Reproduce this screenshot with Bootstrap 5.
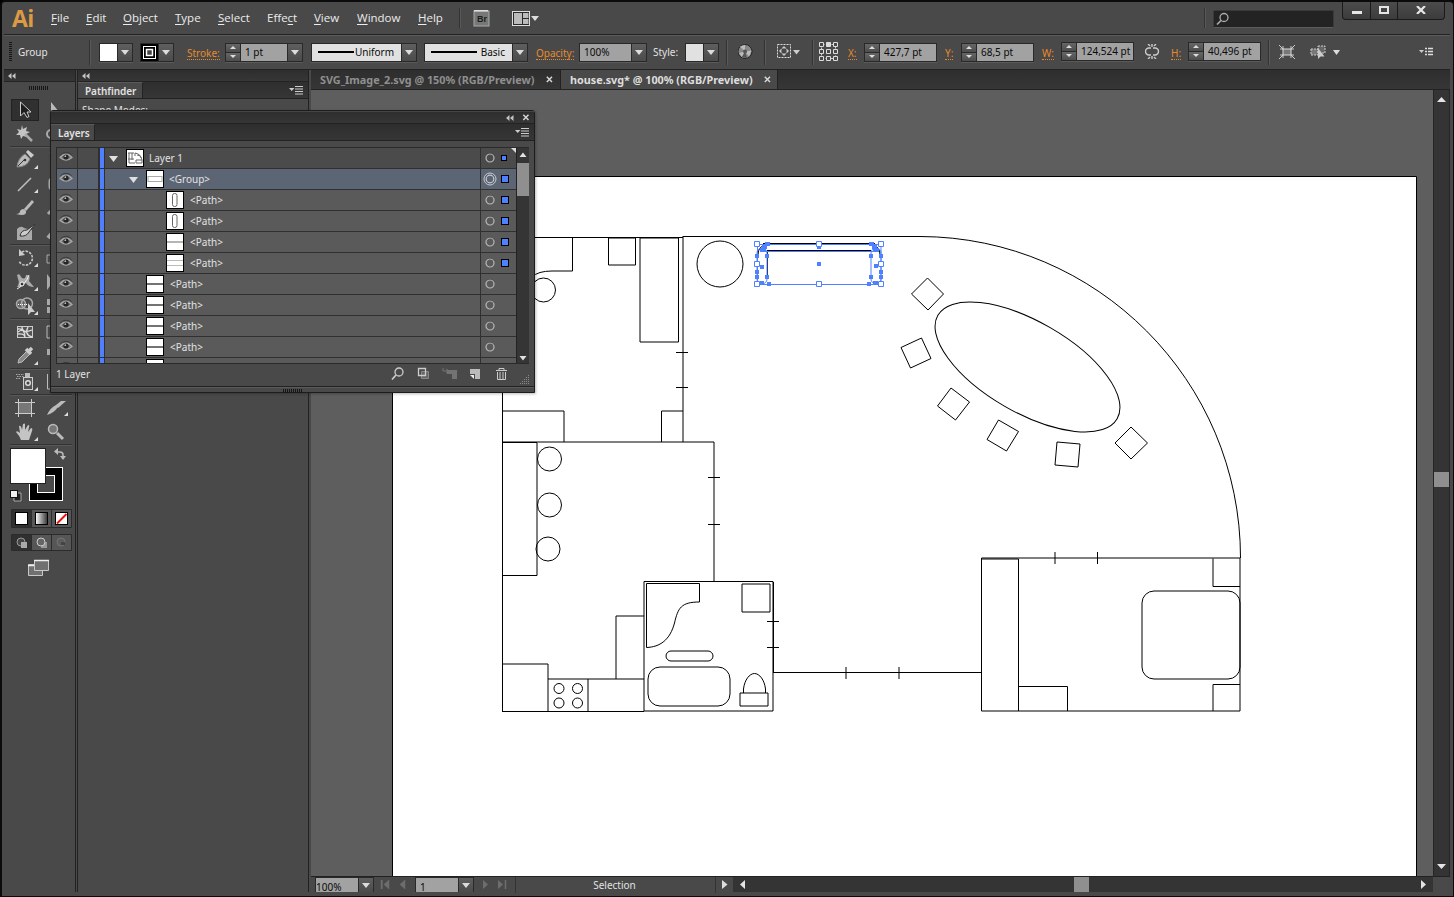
<!DOCTYPE html>
<html lang="en">
<head>
<meta charset="utf-8">
<title>Illustrator</title>
<link rel="stylesheet" href="https://cdn.jsdelivr.net/npm/bootstrap@5.3.0/dist/css/bootstrap.min.css">
<script src="https://cdn.jsdelivr.net/npm/bootstrap@5.3.0/dist/js/bootstrap.bundle.min.js"></script>
<style>
*{box-sizing:border-box}
body{width:1454px;height:897px;overflow:hidden;background:#000;font:10px/14px "Noto Sans","Open Sans",sans-serif;color:#e2e2e2;white-space:nowrap}
svg{display:block;flex:none;overflow:hidden}
.win{width:1454px;height:897px;overflow:hidden;background:#494949;border:1px solid #0b0b0b;border-left-width:2px;border-top-width:2px;border-radius:5px 5px 0 0;padding:0 3px 3px 2px}
.menubar{height:32px;display:grid;grid-template-columns:47px 35px 37px 52px 43px 49px 47px 43px 61px 41px 14px 39px 692px 9px 129px 1fr;align-items:center;font:11.5px/18px "Open Sans","Noto Sans",sans-serif;color:#ececec}
.menubar u{text-underline-offset:2px}
.logo{font:bold 23px/30px "Open Sans",sans-serif;color:#dc9a45;padding-left:8px;letter-spacing:-.5px}
.vsep{width:2px;height:20px;background:#333;border-right:1px solid #595959}
.finder{width:121px;height:18px;background:#232323;border:1px solid #3a3a3a;border-bottom-color:#5c5c5c;border-radius:2px;margin-top:1px}
.winbtns{width:103px;height:18px;border:1px solid #1a1a1a;border-top:0;border-radius:0 0 4px 4px;align-self:start;background:linear-gradient(#4c4c4c,#3c3c3c)}
.winbtns>span{border-left:1px solid #1a1a1a;display:flex;align-items:center;justify-content:center;padding-bottom:1px}
.winbtns>span:first-child{border-left:0;width:27px}
.winbtns>span:nth-child(2){width:27px}
.winbtns>span:last-child{flex:1}
.ctl{height:35px;border-top:1px solid #222;box-shadow:inset 0 1px #5c5c5c;display:grid;align-items:center;grid-template-columns:14px 81px 41px 47px 38px 86px 113px 112px 43px 74px 32px 41px 12px 26px 13px 35px 7px 29px 16px 81px 16px 81px 19px 84px 26px 17px 80px 11px 31px 109px 20px}
.ctl>svg{margin-top:-1px}
.fld{display:inline-flex;height:19px;border:1px solid #292929;box-shadow:0 1px #5a5a5a;color:#0a0a0a;width:fit-content}
.val{background:#a2a2a2;padding:0 4px;line-height:17px}
.lite{background:#e1e1e1;display:flex;align-items:center;justify-content:space-between;padding:0 7px 0 6px}
.ln{height:2px;background:#000}
.arr{width:15px;background:linear-gradient(#5f5f5f,#4b4b4b);border-left:1px solid #292929;display:flex;align-items:center;justify-content:center}
.arr:after{content:"";border:4px solid transparent;border-top:5px solid #dcdcdc;border-bottom:0}
.spin{width:15px;border-right:1px solid #292929;display:flex;flex-direction:column}
.spin i{flex:1;background:linear-gradient(#666,#4d4d4d);display:flex;align-items:center;justify-content:center}
.spin i+i{border-top:1px solid #292929}
.spin i:after{content:"";border:3px solid transparent;border-bottom:3px solid #ddd;border-top:0}
.spin i+i:after{border-bottom:0;border-top:3px solid #ddd}
.w-18{width:17px}.w-46{width:46px}.w-56{width:56px}
.up{margin-bottom:2px}
.uniform{width:89px}.basic{width:87px}.opac{width:51px}
.uniform .ln{width:36px}.basic .ln{width:46px}
.org{color:#e88a2c;border-bottom:1px dotted #e88a2c;line-height:12px;width:fit-content;margin-top:2px}
.vline{width:2px;height:25px;background:#333;border-right:1px solid #5a5a5a}
.work{height:823px;border-top:1px solid #222;position:relative}
.dark{background:linear-gradient(#2e2e2e,#363636)}
.tools{width:72px;border-right:1px solid #222}
.tcol{width:62px;margin-left:6px}
.tgrip{height:16px;padding:4px 2px 0 0}
.hd{height:12px;border-bottom:1px solid #232323;padding:3px 0 0 4px}
.grip{width:20px;height:4px;background:repeating-linear-gradient(90deg,#161616 0 1px,transparent 1px 2px)}
.trow{height:24px;display:flex}
.trow svg{width:30px;height:24px}
.tsep{height:2px;background:#333;border-bottom:1px solid #585858}
.side{width:232px;border-left:1px solid #222;margin-left:1px;border-right:1px solid #222}
.pbar{height:17px;border-bottom:1px solid #222}
.ptab{background:#494949;border-right:1px solid #222;border-top:1px solid #5a5a5a;font-weight:600;line-height:16px;width:65px;padding-left:7px;letter-spacing:-.05px}
.layers .ptab{width:44px}
.doc{width:1139px;margin-left:2px}
.dtabs{height:20px;border-bottom:1px solid #222;font-size:10.8px;font-weight:700;color:#8f8f8f}
.dtabs>span{border-right:1px solid #222;display:flex;align-items:center;justify-content:space-between}
.t1{width:250px;padding:0 7px 0 9px}.t2{width:217px;padding:0 6px 0 9px;background:#494949;color:#dedede}
.stage{height:786px}
.foot{height:16px;background:#494949;border-top:1px solid #222;display:grid;grid-template-columns:4px 57px 43px 58px 42px 201px 17px 701px 1fr}
.foot .fld{height:15px;border-bottom:0;box-shadow:none}
.foot .val{line-height:18px;width:42px}
.stat{border-left:1px solid #333;border-right:1px solid #333;line-height:16px;text-align:center;padding-right:2px}
.layers{position:absolute;left:46px;top:40px;width:485px;height:283px;background:#494949;border:1px solid #1d1d1d;border-radius:3px 3px 0 0;box-shadow:1px 1px 3px #0004}
.lhd{height:13px;border-bottom:1px solid #222;border-top:1px solid #454545}
.list{margin:6px 5px 0 5px;height:217px;border:1px solid #2a2a2a;border-right:0}
.rows{width:460px;height:215px;overflow:hidden}
.lrow{height:21px;display:grid;grid-template-columns:21px 21px 6px 376px 36px;background:#5a5a5a;border-bottom:1px solid #303030}
.lrow>*{border-right:1px solid #303030;display:flex;align-items:center}
.lrow>:last-child{border-right:0;position:relative}
.lrow>:last-child>svg:first-child{margin-left:-1px}
.lrow.top{background:#4b4b4b}.lrow.sel{background:#5b6574}
.lrow>.bar{background:#4f80ff;border:1px solid #303030;border-width:0 1px}
.th{width:18px;height:18px;background:#fff;border:1px solid #000;margin-right:6px}
.top .th,.sel .th{margin:0 5px 0 4px}
.d0{padding-left:1px}.d1{padding-left:21px}.d2{padding-left:61px}.d3{padding-left:41px}
.sq{width:8px;height:8px;background:#4f80ff;border:1px solid #000;margin-left:1px}
.top .sq{width:6px;height:6px}
.lscroll{width:13px;background:#353535;border-left:1px solid #232323;display:flex;flex-direction:column;align-items:center}
.lfoot{height:22px;padding:0 25px 2px 5px}
.lgrip{border-top:1px solid #222;box-shadow:inset 0 1px #5a5a5a;padding-top:2px}
</style>
</head>
<body>
<svg width="0" height="0" class="position-absolute"><defs>
<symbol id="eye" viewBox="0 0 20 20"><path d="M3 9.500Q9 3 15 9.500Q9 14.500 3 9.500Z" fill="#6c6c6c" stroke="#a8a8a8" stroke-width="1.300"/><circle cx="9" cy="9" r="2.600" fill="#262626"/><path d="M3.500 6.500Q9 2 14.500 6.500" fill="none" stroke="#3c3c3c"/><circle cx="8.300" cy="8.200" r=".9" fill="#bbb"/></symbol>
<symbol id="ring" viewBox="0 0 20 20"><path d="M6 8a4.500 4.500 0 0 1 8 0" fill="none" stroke="#222"/><circle cx="10" cy="10" r="4" fill="none" stroke="#b8b8b8" stroke-width="1.200"/></symbol>
<symbol id="ring2" viewBox="0 0 20 20"><circle cx="10" cy="10" r="6" fill="none" stroke="#c5cad0"/><circle cx="10" cy="10" r="3.800" fill="none" stroke="#c5cad0" stroke-width="1.200"/></symbol>
<symbol id="coll" viewBox="0 0 8 6"><path d="M3.500 0V6L0 3zM7.500 0V6L4 3z" fill="#c4c4c4"/></symbol>
<symbol id="pmenu" viewBox="0 0 15 9"><path d="M0 2h5.500L2.700 5z" fill="#ccc"/><path d="M6 .5h8M6 3h8M6 5.500h8M6 8h8" stroke="#ccc"/></symbol>
<symbol id="x" viewBox="0 0 7 7"><path d="M.8.8 6 6M6 .8.8 6" stroke="#d5d5d5" stroke-width="1.500"/></symbol>
<linearGradient id="g"><stop stop-color="#fff"/><stop offset="1" stop-color="#333"/></linearGradient>
</defs></svg>

<div class="win">
<nav class="menubar">
 <span class="logo">Ai</span>
 <span><u>F</u>ile</span><span><u>E</u>dit</span><span><u>O</u>bject</span><span><u>T</u>ype</span><span><u>S</u>elect</span><span>Effe<u>c</u>t</span><span><u>V</u>iew</span><span><u>W</u>indow</span><span><u>H</u>elp</span>
 <span class="vsep"></span>
 <svg width="17" height="17"><rect x="1" y="1" width="15" height="15" fill="#777" stroke="#aaa"/><path d="M1 .8H15" stroke="#ddd" stroke-width="1.500"/><text x="4" y="12" font-size="9" font-weight="700" fill="#1c1c1c" font-family="Liberation Sans">Br</text></svg>
 <svg width="28" height="17"><rect x=".5" y="1.500" width="17" height="14" fill="#292929" stroke="#ddd"/><path d="M2 3h8v11H2zM11 3h5.500v5H11zM11 9h5.500v5H11z" fill="#bbb"/><path d="M19 6h8l-4 5z" fill="#ddd"/></svg>
 <span class="vsep"></span>
 <span class="finder"><svg width="20" height="16"><circle cx="10" cy="6.500" r="4" fill="none" stroke="#aaa" stroke-width="1.300"/><path d="M7 9.500 3 13.500" stroke="#aaa" stroke-width="1.700"/></svg></span>
 <span class="winbtns d-flex"><span><svg width="10" height="10"><path d="M0 6h10v3H0z" fill="#e6e6e6"/></svg></span><span><svg width="10" height="8"><rect x="1" y="1" width="8" height="6" fill="none" stroke="#e6e6e6" stroke-width="2"/></svg></span><span><svg width="10" height="8"><path d="M1 0l8 8M9 0 1 8" stroke="#e6e6e6" stroke-width="2.200"/></svg></span></span>
</nav>

<div class="ctl">
 <svg width="8" height="20"><path d="M5 .5h3M5 2.500h3M5 4.500h3M5 6.500h3M5 8.500h3M5 10.500h3M5 12.500h3M5 14.500h3M5 16.500h3M5 18.500h3" stroke="#161616"/></svg>
 <span class="d-flex align-items-center justify-content-between">Group<span class="vline me-2"></span></span>
 <span class="fld"><span class="w-18 bg-white"></span><span class="arr"></span></span>
 <span class="fld"><svg width="17" height="17"><path d="M0 0h17v17H0z"/><rect x="2.500" y="2.500" width="12" height="12" fill="#000" stroke="#fff"/><rect x="5.500" y="5.500" width="6" height="6" fill="#444" stroke="#fff" stroke-width="1.500"/></svg><span class="arr"></span></span>
 <span class="org">Stroke:</span>
 <span class="fld"><span class="spin"><i></i><i></i></span><span class="val w-46">1 pt</span><span class="arr"></span></span>
 <span class="fld"><span class="lite uniform"><span class="ln"></span>Uniform</span><span class="arr"></span></span>
 <span class="fld"><span class="lite basic"><span class="ln"></span>Basic</span><span class="arr"></span></span>
 <span class="org">Opacity:</span>
 <span class="fld"><span class="val opac">100%</span><span class="arr"></span></span>
 <span>Style:</span>
 <span class="fld"><span class="w-18 lite"></span><span class="arr"></span></span>
 <span class="vline"></span>
 <svg width="15" height="15"><circle cx="7" cy="7.500" r="7" fill="#888" stroke="#252525"/><path d="M7 7.500 2 2.500 7 .8zM7 7.500l6.500-1-2.500 6zM7 7.500 4 13 1 9z" fill="#bbb"/><path d="M7 7.500 9 14l-5-1z" fill="#555"/><circle cx="7" cy="7.500" r="2" fill="#555"/></svg>
 <span class="vline"></span>
 <svg width="24" height="15"><rect x=".5" y=".5" width="13" height="13" fill="none" stroke="#ddd" stroke-dasharray="2 1"/><circle cx="7" cy="7" r="3" fill="none" stroke="#999"/><path d="M5 4l2-2 2 2zM5 10l2 2 2-2zM4 5 2 7l2 2zM10 5l2 2-2 2zM16 6h7l-3.500 4.500z" fill="#ccc"/></svg>
 <span class="vline"></span>
 <svg width="20" height="20"><path d="M2.500 2.500h14v14h-14z" fill="none" stroke="#ccc" stroke-dasharray="3 2"/><g fill="#494949" stroke="#ddd"><path d="M.5.5h4v4h-4zM.5 7.500h4v4h-4zM.5 14.500h4v4h-4zM7.500 7.500h4v4h-4zM7.500 14.500h4v4h-4zM14.500.5h4v4h-4zM14.500 7.500h4v4h-4zM14.500 14.500h4v4h-4z"/><path d="M7.500.5h4v4h-4z" fill="#ddd"/></g></svg>
 <span class="org">X:</span>
 <span class="fld"><span class="spin"><i></i><i></i></span><span class="val w-56">427,7 pt</span></span>
 <span class="org">Y:</span>
 <span class="fld"><span class="spin"><i></i><i></i></span><span class="val w-56">68,5 pt</span></span>
 <span class="org">W:</span>
 <span class="fld up"><span class="spin"><i></i><i></i></span><span class="val w-56">124,524 pt</span></span>
 <svg width="15" height="15"><path d="M6 4H4a3.500 3.500 0 0 0 0 7h2M8 4h2a3.500 3.500 0 0 1 0 7H8M7 0v3M7 12v3M3 0l2 2M11 0 9 2M3 15l2-2M11 15l-2-2" fill="none" stroke="#ccc" stroke-width="1.400"/></svg>
 <span class="org">H:</span>
 <span class="fld up"><span class="spin"><i></i><i></i></span><span class="val w-56">40,496 pt</span></span>
 <span class="vline"></span>
 <svg width="16" height="14"><path d="M0 0l4 4M16 0l-4 4M0 14l4-4M16 14l-4-4M1 4h3V1M15 4h-3V1M1 10h3v3M15 10h-3v3" fill="none" stroke="#ccc"/><rect x="4" y="4" width="8" height="6" fill="#777" stroke="#ddd"/></svg>
 <svg width="31" height="14"><path d="M1 4h7v6H1z" fill="#777" stroke="#ccc" stroke-dasharray="2 1"/><path d="M8 1h7v7H8z" fill="#666" stroke="#ccc" stroke-dasharray="2 1"/><path d="M8 3v11l2.500-2.500h4z" fill="#ccc"/><path d="M23 5h7l-3.500 5z" fill="#ddd"/></svg>
 <svg width="14" height="9"><path d="M0 3h5L2.500 6z" fill="#ccc"/><path d="M6 1.500h2M9 1.500h5M6 4.500h2M9 4.500h5M6 7.500h2M9 7.500h5" stroke="#ddd" stroke-width="1.300"/></svg>
</div>

<div class="work d-flex">
 <aside class="tools">
  <div class="hd dark"><svg width="8" height="6"><use href="#coll"/></svg></div>
  <div class="tgrip d-flex justify-content-center"><div class="grip"></div></div>
  <div class="tcol">
  <div class="trow"><svg><rect x="1.500" y="1.500" width="27" height="21" fill="#303030" stroke="#222"/><path d="M10.500 4v14l3.500-3.500 3 5 2-1-2-4.500h4z" fill="#1d1d1d" stroke="#ccc"/></svg><svg><path d="M11 4v14l3.500-3.500h5z" fill="#bbb"/></svg></div>
  <div class="trow"><svg><path d="M12 3l1 4 4-2-1 4 4 1-4 2 1 3-4-1-2 3-1-4-4 0 3-3-2-3 4 1z" fill="#c4c4c4"/><path d="M15 12l7 7" stroke="#aaa" stroke-width="2.500"/></svg><svg><circle cx="11" cy="12" r="4" fill="none" stroke="#aaa" stroke-width="2"/></svg></div>
  <div class="tsep"></div>
  <div class="trow"><svg><path d="M7 19q1-9 8-13l5 5q-3 8-13 8z" fill="#bbb" stroke="#888"/><path d="M16 4l2-2 6 5-3 3z" fill="#ccc"/><path d="M8 18l6-6" stroke="#333"/><circle cx="15" cy="12" r="1.300" fill="#333"/><path d="M28 21v-4l-4 4z" fill="#ddd"/></svg><svg><path d="M10 4l3 4v4" stroke="#aaa" fill="none"/></svg></div>
  <div class="trow"><svg><path d="M8 19 21 6" stroke="#bbb" stroke-width="1.600"/><path d="M28 21v-4l-4 4z" fill="#ddd"/></svg><svg><rect x="9.500" y="6.500" width="12" height="11" rx="3" fill="none" stroke="#aaa" stroke-width="2"/></svg></div>
  <div class="trow"><svg><path d="M6 18q4 0 4-3 3-4 6 0 1 6-10 3z" fill="#bbb"/><path d="M15 14 23 5" stroke="#bbb" stroke-width="2.800"/></svg><svg><path d="M8 18 20 5" stroke="#aaa" stroke-width="3"/></svg></div>
  <div class="trow"><svg><path d="M7 9q4-4 7-1l8 2v10H7z" fill="#aaa"/><path d="M10 16q1-6 7-6l8-6-6 8q-3 5-9 4z" fill="#ccc" stroke="#333"/></svg><svg><path d="M8 18 18 6" stroke="#aaa" stroke-width="4"/></svg></div>
  <div class="tsep"></div>
  <div class="trow"><svg><path d="M12 6a7 7 0 1 1-3 9" fill="none" stroke="#c5c5c5" stroke-width="1.600" stroke-dasharray="2.500 1.200"/><path d="M9 3v7l6-1z" fill="#ccc"/><path d="M28 21v-4l-4 4z" fill="#ddd"/></svg><svg><path d="M7 9h8v8H7z" fill="none" stroke="#aaa"/></svg></div>
  <div class="trow"><svg><path d="M7 5q3-2 4 2 4 4 5-2 5-1 3 6l5 6q-6 0-8-4-4 2-6 4H7q3-4 1-8z" fill="#aaa"/><path d="M7 19Q16 14 19 5" fill="none" stroke="#eee"/><circle cx="12" cy="14" r="2" fill="#333" stroke="#fff"/><path d="M28 21v-4l-4 4z" fill="#ddd"/></svg><svg><path d="M7 4l6 8-6 8z" fill="#aaa"/></svg></div>
  <div class="trow"><svg><circle cx="11" cy="10" r="4.500" fill="#666" stroke="#aaa" stroke-width="1.500"/><circle cx="17" cy="9.500" r="5.500" fill="none" stroke="#aaa" stroke-width="1.500"/><path d="M8 10.500h10" stroke="#fff" stroke-dasharray="1 1"/><path d="M18 9v12l3-3h4z" fill="#ccc"/><path d="M28 21v-4l-4 4z" fill="#ddd"/></svg><svg><path d="M7 5h7v6H7zM7 13h7v6H7z" fill="#aaa"/></svg></div>
  <div class="tsep"></div>
  <div class="trow"><svg><rect x="7.500" y="6.500" width="15" height="11" fill="#555" stroke="#ccc"/><path d="M8 9q7-1 7 9M12 7q0 7 10 3M8 14q7-1 7 4M18 7q-4 8 4 10M8 12q5-4 10 2" fill="none" stroke="#ddd" stroke-width="1.300"/></svg><svg><path d="M7 6h10v12H7z" fill="none" stroke="#bbb"/></svg></div>
  <div class="trow"><svg><path d="M8 19l1-4 8-8 3 3-8 8z" fill="#888" stroke="#bbb"/><path d="M16 5l5 5M18 8l4-4" stroke="#ccc" stroke-width="3.500"/><path d="M28 21v-4l-4 4z" fill="#ddd"/></svg><svg><path d="M7 5h8v6H7z" fill="#aaa"/></svg></div>
  <div class="tsep"></div>
  <div class="trow"><svg><path d="M6 4.500h8M7 6.500h7M6 8.500h5" stroke="#aaa" stroke-dasharray="1.500 1"/><path d="M15 3h5v4h-5z" fill="#bbb"/><rect x="13.500" y="7.500" width="9" height="12" fill="#555" stroke="#ccc"/><circle cx="18" cy="13" r="2.300" fill="#444" stroke="#ddd" stroke-width="1.500"/><path d="M28 21v-4l-4 4z" fill="#ddd"/></svg><svg><path d="M7.500 4v15h13" fill="none" stroke="#bbb"/></svg></div>
  <div class="tsep"></div>
  <div class="trow"><svg><rect x="9" y="7" width="12" height="10" fill="#777"/><path d="M8.500 3v18M21.500 3v18M5 6.500h20M5 17.500h20" stroke="#ccc"/></svg><svg><path d="M7 19q3-7 9-10l2 2q-4 6-11 8zM16 9l5-4h5l-8 7z" fill="#bbb"/><path d="M28 20v-4l-4 4z" fill="#ddd"/></svg></div>
  <div class="trow"><svg><path d="M11 20q-2-5-5-8 1-2 4 1L9 6q2-1 3 4l1-6q2-1 2 0v6l3-5q2 0 1 2l-1 5 3-4q2 0 1 3l-3 9z" fill="#c4c4c4"/><path d="M28 21v-4l-4 4z" fill="#ddd"/></svg><svg><circle cx="13" cy="9" r="4.500" fill="#777" stroke="#bbb" stroke-width="1.500"/><path d="M17 13l6 6" stroke="#bbb" stroke-width="3"/></svg></div>
  <div class="tsep"></div>
  <svg width="62" height="134" viewBox="10 446 62 134" class="d-block">
   <rect x="29" y="467" width="34" height="34" fill="#fff"/><path d="M30 468h32v32H30z"/><rect x="37.500" y="475.500" width="17" height="17" fill="#494949" stroke="#fff"/>
   <rect x="10.500" y="448.500" width="35" height="35" fill="#fff" stroke="#222"/>
   <path d="M57 452h3q3 0 3 3v2" fill="none" stroke="#bbb" stroke-width="1.500"/><path d="M58 448v7l-4-3.500zM60 456h6l-3 4z" fill="#bbb"/>
   <path d="M14 493h7v8h-7z" fill="#222" stroke="#aaa"/><rect x="10.500" y="490.500" width="7" height="7" fill="#eee" stroke="#111"/>
   <path d="M11.500 509.500h60v18h-60zM11.500 534.500h60v16h-60z" fill="#565656" stroke="#2b2b2b"/><path d="M12 510h20v17H12zM12 535h20v15H12z" fill="#303030"/><path d="M31.500 509v19M51.500 509v19M31.500 534v17M51.500 534v17" stroke="#2b2b2b"/>
   <g stroke="#000"><rect x="15.500" y="512.500" width="12" height="12" fill="#fff"/><rect x="35.500" y="512.500" width="12" height="12" fill="url(#g)"/><rect x="55.500" y="512.500" width="12" height="12" fill="#fff"/></g><path d="M57 523.500 66.500 514" stroke="#e11" stroke-width="2"/>
   <circle cx="21" cy="542" r="4" fill="#444" stroke="#999"/><path d="M21 542h6v6h-6z" fill="#aaa"/><path d="M41 542h6v6h-6z" fill="#999"/><circle cx="41" cy="542" r="4" fill="#666" stroke="#ccc"/><circle cx="61" cy="542" r="4" fill="#5c5c5c" stroke="#747474"/><path d="M61 542h4v3h-4z" fill="#444"/>
   <g fill="#707070" stroke="#c8c8c8"><path d="M28.500 564.500h14v11h-14z"/><path d="M34.500 560.500h14v10h-14z"/></g><path d="M34 560.500h15M28 565.500h6" stroke="#eee" stroke-width="1.500"/>
  </svg>
  </div>
 </aside>
 <aside class="side">
  <div class="hd dark"><svg width="8" height="6"><use href="#coll"/></svg></div>
  <div class="dark pbar d-flex justify-content-between align-items-center"><span class="ptab h-100">Pathfinder</span><svg width="15" height="9" class="me-1"><use href="#pmenu"/></svg></div>
  <div class="pt-1 ps-1">Shape Modes:</div>
 </aside>
 <main class="doc d-flex flex-column">
  <div class="dtabs dark d-flex"><span class="t1"><span>SVG_Image_2.svg @ 150% (RGB/Preview)</span><svg width="7" height="7"><use href="#x"/></svg></span><span class="t2"><span>house.svg* @ 100% (RGB/Preview)</span><svg width="7" height="7"><use href="#x"/></svg></span></div>
  <div class="stage d-flex">
   <svg width="1122" height="786" viewBox="311 90 1122 786" fill="none" stroke="#000">
    <path d="M311 90h1122v786H311z" fill="#5e5e5e" stroke="none"/>
    <path d="M392.500 880V176.500h1024V880z" fill="#fff"/>
    <path d="M503 237.500H683M683 236.500H920C1097 237 1240.500 381 1240.500 558M683 236V442M676 352.500h12M676 387.500h12" />
    <path d="M640 238h38.500v104H640zM608.500 238h27v27h-27zM572.500 237v34H552q-14 0-20 6M502.500 237V712M503 411h61v31M661.500 442v-31H683M503 442H714V581M503 442.500h34V575.500h-34M708 477.500h12M708 524.500h12"/>
    <path d="M644 581.500H773V711H644zM616 679v-63h28M503 664h45v48M502 711.500h142M548 679h96M588 679v33M773.500 582v91M767 621.500h12M767 647.500h12M774 672.500H981M846 667v12M899 667v12"/>
    <circle cx="543.500" cy="290" r="12"/><circle cx="549.500" cy="459" r="12"/><circle cx="549.500" cy="505" r="12"/><circle cx="548" cy="549" r="12"/><circle cx="720" cy="264" r="23"/>
    <circle cx="559" cy="688.500" r="5"/><circle cx="577.500" cy="688.500" r="5"/><circle cx="559" cy="703" r="5"/><circle cx="577.500" cy="703" r="5"/>
    <path d="M646.500 583.500H699.500V602C681 602 678 608 674.500 623C670 640 660 647 646.500 647.500zM742 584h28v28h-28zM743.500 693v-4c1-9 6-15.500 11-15.500s10 6.500 11 15.500v4M740 693h28v13h-28z"/>
    <rect x="666" y="651" width="47" height="10" rx="5"/><rect x="648" y="667" width="82" height="39" rx="12"/>
    <path d="M981.500 558H1240V711H981.500zM1018.500 711V559H981M1019 686.500h48.500V711M1055 552v12M1097.500 552v12M1213 558.500v28h27M1240 684.500h-27V711"/><rect x="1142" y="591" width="98" height="88" rx="12"/>
    <ellipse cx="1027.500" cy="367" rx="103.500" ry="45.400" transform="rotate(30 1027.500 367)"/>
    <path d="M927.500 278 943.500 294 928 310 911.500 294zM901 347.500l20.500-9.500 9.500 20.500-20.500 9.500zM951 388l18.500 14-14 18-18-14zM998.500 420l20 11.500-12 19.500-19.500-11.500zM1057 442l23 2-2 23-23-2zM1131 427l16.500 16-16.500 16-16-16z"/>
    <path d="M763 243.500h112M767 250.500h104M767.500 251v26M758 255q0-9 8-10M880 255q0-9-8-10"/>
    <g stroke="#4f80ff"><rect x="757.500" y="244.500" width="123.500" height="40"/><path d="M765 251.500h108"/><rect x="757" y="248" width="10" height="36" rx="5"/><rect x="871" y="248" width="10" height="36" rx="5"/></g>
    <g fill="#4f80ff" stroke="none"><path d="M817 262h4v4h-4zM817 245h4v4h-4zM765 242h5v4h-5zM869 242h5v4h-5zM760 248h6v4h-6zM873 248h6v4h-6zM762 244h5v5h-5zM872 244h5v5h-5zM765 254h4v4h-4zM755 254h4v4h-4zM760 265h4v4h-4zM755 270h4v4h-4zM755 275h4v4h-4zM765 275h4v4h-4zM760 281h4v4h-4zM767 282h4v4h-4zM869 254h4v4h-4zM879 254h4v4h-4zM874 264h4v4h-4zM879 270h4v4h-4zM879 275h4v4h-4zM869 275h4v4h-4zM873 281h5v4h-5zM867 282h4v4h-4z"/></g>
    <path d="M754.500 241.500h5v5h-5zM816.500 241.500h5v5h-5zM878.500 241.500h5v5h-5zM754.500 261.500h5v5h-5zM878.500 261.500h5v5h-5zM754.500 281.500h5v5h-5zM816.500 281.500h5v5h-5zM878.500 281.500h5v5h-5z" fill="#fff" stroke="#4f80ff"/>
   </svg>
   <svg width="17" height="786" viewBox="1433 90 17 786"><path d="M1433 90h17v786h-17z" fill="#343434"/><path d="M1433.500 90v786M1449.500 90v786" stroke="#252525"/><path d="M1437 102h9l-4.500-5zM1437 864h9l-4.500 5z" fill="#e4e4e4"/><path d="M1434 472h15v15h-15z" fill="#8f8f8f"/></svg>
  </div>
  <div class="foot">
   <span></span>
   <span class="fld"><span class="val px-1 ps-0">100%</span><span class="arr"></span></span>
   <svg width="43" height="15"><path d="M10.500 3v9M17 3v9l-5-4.500zM33 3v9l-5-4.500z" fill="#6d6d6d" stroke="#6d6d6d" stroke-width=".6"/><path d="M9.500 3v9" stroke="#6d6d6d" stroke-width="1.500"/></svg>
   <span class="fld"><span class="val">1</span><span class="arr"></span></span>
   <svg width="42" height="15"><path d="M10 3v9l5-4.500zM25 3v9l5-4.500z" fill="#6d6d6d"/><path d="M32.500 3v9" stroke="#6d6d6d" stroke-width="1.500"/></svg>
   <span class="stat">Selection</span>
   <svg width="17" height="15"><path d="M6 3v9l5.500-4.500z" fill="#ddd"/></svg>
   <svg width="701" height="15" viewBox="733 877 701 15"><path d="M733 877h700v15H733z" fill="#343434"/><path d="M745 880v9l-5-4.500zM1421 880v9l5-4.500z" fill="#e4e4e4"/><path d="M1074 877h15v15h-15z" fill="#8f8f8f"/></svg>
   <span></span>
  </div>
 </main>

 <section class="layers">
  <div class="lhd dark d-flex justify-content-end align-items-center gap-2"><svg width="8" height="6"><use href="#coll"/></svg><svg width="8" height="7" class="me-1"><use href="#x"/></svg></div>
  <div class="pbar dark d-flex justify-content-between align-items-center"><span class="ptab h-100">Layers</span><svg width="15" height="9" class="me-1"><use href="#pmenu"/></svg></div>
  <div class="list d-flex">
   <div class="rows" id="rows"></div>
   <div class="lscroll"><svg width="12" height="215" viewBox="0 0 12 215"><path d="M2.500 9h7L6 4.500zM2.500 208h7L6 212.500z" fill="#e0e0e0"/><path d="M0 15h12v33H0z" fill="#8f8f8f"/></svg></div>
  </div>
  <div class="lfoot d-flex align-items-center justify-content-between"><span>1 Layer</span>
   <svg width="118" height="14"><circle cx="8" cy="5" r="4" fill="none" stroke="#ccc" stroke-width="1.300"/><path d="M5 8 1 12.500" stroke="#ccc" stroke-width="1.700"/><path d="M30.500 4.500h7v7h-7z" fill="#666" stroke="#888"/><path d="M27.500 1.500h7v7h-7z" fill="none" stroke="#ccc" stroke-width="1.300"/><path d="M52 1v3h5M55 2l3 2-3 2" fill="none" stroke="#777"/><path d="M56 3h10v9h-5V7h-5z" fill="#737373"/><path d="M79 2h10v10h-5V7h-5z" fill="#bbb"/><path d="M79 8l4 4V8z" fill="#eee"/><path d="M105 3.500h11M108 3v-1.500h5V3M106.500 5v7.500h8V5M109 5v7M112 5v7" fill="none" stroke="#ccc"/></svg></div>
  <div class="lgrip d-flex justify-content-center"><div class="grip"></div></div>
  <svg width="10" height="10" class="position-absolute bottom-0 end-0 mb-2 me-1"><path d="M8 1.500h1.500M6 3.500h3.500M4 5.500h5.500M2 7.500h7.500M0 9.500h9.500" stroke="#888" stroke-dasharray="1 1"/></svg>
 </section>
</div>
</div>
<script>
const tri='<svg width="16" height="12"><path d="M3 4h9l-4.500 6z" fill="#e0e0e0"/></svg>';
const thumbs={
 house:'<path d="M1 3h6M2 3v10h6M5 3v7M8 3v3M1 9h6M9 10h6V13H9zM8 3q6 1 7 7M10 5q4 0 4 3" fill="none" stroke="#666"/>',
 group:'<rect x="1" y="5.500" width="14" height="5" fill="none" stroke="#aaa"/>',
 pill:'<rect x="5.500" y="1.500" width="4.500" height="13" rx="2" fill="none" stroke="#666"/>',
 band:'<path d="M0 8h16" stroke="#b5b5b5" stroke-width="2"/>',
 box:'<path d="M0 5.500h16M0 10.500h16" stroke="#bbb"/>',
 line:'<path d="M0 8h16" stroke="#444" stroke-width="1.500"/>'};
const data=[['Layer 1','d0','house','top'],['<Group>','d1','group','sel'],['<Path>','d2','pill'],['<Path>','d2','pill'],['<Path>','d2','band'],['<Path>','d2','box'],
 ['<Path>','d3','line'],['<Path>','d3','line'],['<Path>','d3','line'],['<Path>','d3','line'],['<Path>','d3','line']];
document.getElementById('rows').innerHTML=data.map(([t,d,k,c=''],i)=>`<div class="lrow ${c}"><span><svg width="20" height="20"><use href="#eye"/></svg></span><span></span><span class="bar"></span><span class="${d}">${c?tri:''}<span class="th"><svg width="16" height="16">${thumbs[k]}</svg></span>${t.replace('<','&lt;')}</span><span><svg width="20" height="20"><use href="#ring${i==1?2:''}"/></svg>${i<6?'<i class="sq"></i>':''}${i?'':'<svg class="position-absolute top-0 end-0" width="6" height="6"><path d="M0 0h6v6z" fill="#ddd"/></svg>'}</span></div>`).join('');
</script>
</body>
</html>
